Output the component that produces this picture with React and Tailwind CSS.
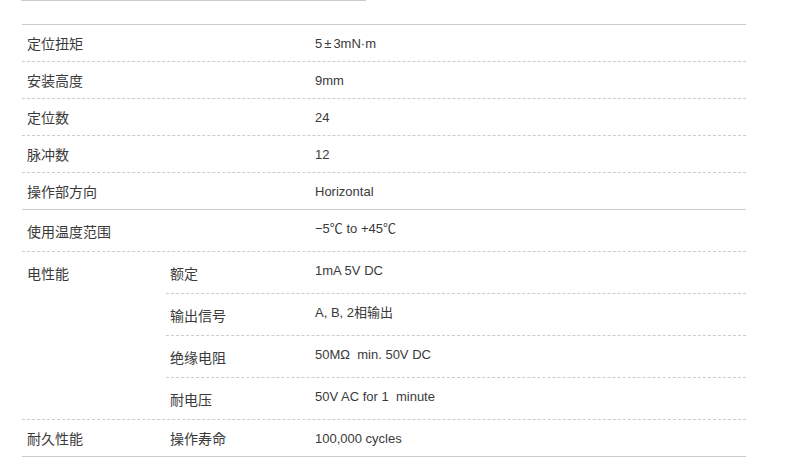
export default function App() {
  const lbl = "text-[14px] text-[#3a3a3a] [font-family:'Noto_Sans_CJK_JP','Noto_Sans_CJK_SC',sans-serif] leading-none";
  const val = "text-[13px] text-[#3a3a3a] [font-family:'Liberation_Sans','Noto_Sans_CJK_JP',sans-serif] leading-none whitespace-pre";
  const simple = [
    ["定位扭矩", <>5<span className="mx-[2px]">±</span>3mN·m</>],
    ["安装高度", "9mm"],
    ["定位数", "24"],
    ["脉冲数", "12"],
    ["操作部方向", "Horizontal"],
  ];
  const elec = [
    ["额定", "1mA 5V DC"],
    ["输出信号", "A, B, 2相输出"],
    ["绝缘电阻", "50MΩ  min. 50V DC"],
    ["耐电压", "50V AC for 1  minute"],
  ];
  return (
    <div className="w-[795px] h-[457px] bg-white overflow-hidden">
      <div className="ml-[21px] w-[345px] h-px bg-[#cccccc]" />
      <div className="ml-[22px] mt-[23px] w-[724px]">
        {simple.map(([a, b], i) => (
          <div
            key={a}
            className={`flex items-center h-[37px] border-t border-[#cccccc] ${i === 0 ? "border-solid" : "border-dashed"}`}
          >
            <div className={`w-[288px] pl-[5px] ${lbl}`}>{a}</div>
            <div className={`pl-[5px] ${val}`}>{b}</div>
          </div>
        ))}
        <div className="flex items-center h-[42px] border-t border-solid border-[#cccccc]">
          <div className={`w-[288px] pl-[5px] ${lbl}`}>使用温度范围</div>
          <div className={`pl-[5px] pb-[4px] ${val}`}>−5℃ to +45℃</div>
        </div>
        <div className="flex border-t border-dashed border-[#cccccc]">
          <div className="w-[144px] h-[41px] flex items-center">
            <div className={`pl-[5px] ${lbl}`}>电性能</div>
          </div>
          <div className="flex-1">
            {elec.map(([a, b], i) => (
              <div
                key={a}
                className={`flex items-center ${i === 0 ? "h-[41px]" : "h-[42px] border-t border-dashed border-[#cccccc]"}`}
              >
                <div className={`w-[144px] pl-[4px] ${lbl}`}>{a}</div>
                <div className={`pl-[5px] pb-[4px] ${val}`}>{b}</div>
              </div>
            ))}
          </div>
        </div>
        <div className="flex items-center h-[38px] border-t border-b border-[#cccccc] [border-top-style:dashed] [border-bottom-style:solid]">
          <div className={`w-[144px] pl-[5px] ${lbl}`}>耐久性能</div>
          <div className={`w-[144px] pl-[4px] ${lbl}`}>操作寿命</div>
          <div className={`pl-[5px] ${val}`}>100,000 cycles</div>
        </div>
      </div>
    </div>
  );
}
